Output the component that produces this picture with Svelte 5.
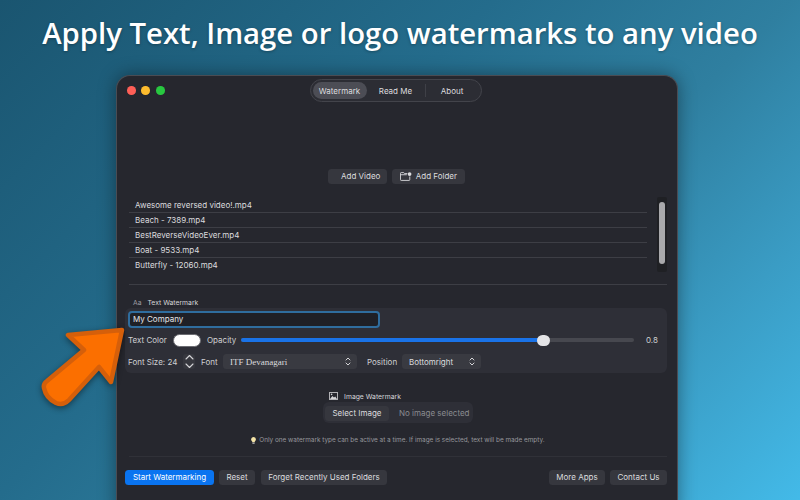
<script lang="ts">
  const files = [
    'Awesome reversed video!.mp4',
    'Beach - 7389.mp4',
    'BestReverseVideoEver.mp4',
    'Boat - 9533.mp4',
    'Butterfly - 12060.mp4'
  ];
  const tabs = ['Watermark', 'Read Me', 'About'];
  let active = $state('Watermark');
  let company = $state('My Company');
  let opacity = 0.8;
</script>

<div class="page">
  <h1>Apply Text, Image or logo watermarks to any video</h1>

  <div class="window">
    <header class="titlebar">
      <div class="lights">
        <span class="light red"></span>
        <span class="light yellow"></span>
        <span class="light green"></span>
      </div>
      <nav class="tabs">
        {#each tabs as tab}
          <button class="tab" class:active={active === tab} onclick={() => (active = tab)}>{tab}</button>
        {/each}
      </nav>
    </header>

    <div class="add-row">
      <button class="btn add-video">Add Video</button>
      <button class="btn add-folder">
        <svg width="12" height="9" viewBox="0 0 12 9" fill="none" stroke="#dcdcdf" stroke-width="0.9">
          <path d="M7.5 1.5H4.6L3.8 .5H1.2Q.5 .5 .5 1.2V7.8Q.5 8.5 1.2 8.5H9.3Q10 8.5 10 7.8V4.5" />
          <path d="M.5 2.7H7" />
          <circle cx="9.8" cy="2" r="1.9" fill="#dcdcdf" stroke="none" />
        </svg>
        Add Folder
      </button>
    </div>

    <div class="list-wrap">
      <ul class="files">
        {#each files as file}
          <li>{file}</li>
        {/each}
      </ul>
      <div class="scrollbar"><span class="thumb"></span></div>
    </div>

    <div class="divider"></div>

    <div class="section-label text-label">
      <span class="aa">Aa</span>
      <span>Text Watermark</span>
    </div>

    <section class="panel">
      <input class="text-input" bind:value={company} />
      <div class="row opacity-row">
        <span class="color-label">Text Color</span>
        <span class="swatch"></span>
        <span class="opacity-label">Opacity</span>
        <div class="slider">
          <span class="fill" style="width: {opacity * 100 - 2}%"></span>
          <span class="knob"></span>
        </div>
        <span class="value">{opacity}</span>
      </div>
      <div class="row font-row">
        <span class="size-label">Font Size: 24</span>
        <span class="stepper">
          <svg width="9" height="15" viewBox="0 0 9 15" fill="none" stroke="#d5d5d8" stroke-width="1.1" stroke-linecap="round" stroke-linejoin="round">
            <path d="M1 5L4.5 1.5L8 5" />
            <path d="M1 10L4.5 13.5L8 10" />
          </svg>
        </span>
        <span class="font-label">Font</span>
        <div class="select font-select">
          <span class="serif">ITF Devanagari</span>
          {@render chevrons()}
        </div>
        <span class="pos-label">Position</span>
        <div class="select pos-select">
          <span>Bottomright</span>
          {@render chevrons()}
        </div>
      </div>
    </section>

    <div class="section-label image-label">
      <svg width="9" height="8" viewBox="0 0 9 8">
        <rect x="0.4" y="0.6" width="8.2" height="6.8" fill="none" stroke="#d5d5d8" stroke-width="0.8" />
        <path d="M1 7L3.4 4L5 5.6L6.2 4.6L8 7Z" fill="#d5d5d8" />
        <circle cx="2.6" cy="2.4" r="0.8" fill="#d5d5d8" />
      </svg>
      <span>Image Watermark</span>
    </div>

    <div class="image-pick">
      <div class="image-box">
        <button class="btn select-image">Select Image</button>
        <span class="no-image">No image selected</span>
      </div>
    </div>

    <p class="hint">
      <svg width="5" height="7" viewBox="0 0 5 7">
        <path d="M2.5 0A2.4 2.4 0 0 0 1.2 4.4V5.2H3.8V4.4A2.4 2.4 0 0 0 2.5 0Z" fill="#f4e3a6" />
        <rect x="1.4" y="5.6" width="2.2" height="1.2" fill="#b9b9bd" />
      </svg>
      Only one watermark type can be active at a time. If image is selected, text will be made empty.
    </p>

    <div class="divider bottom"></div>

    <footer class="actions">
      <button class="btn primary">Start Watermarking</button>
      <button class="btn reset">Reset</button>
      <button class="btn forget">Forget Recently Used Folders</button>
      <span class="spacer"></span>
      <button class="btn more">More Apps</button>
      <button class="btn contact">Contact Us</button>
    </footer>
  </div>

  <svg class="arrow" width="100" height="96" viewBox="0 0 100 96">
    <path
      d="M32 13L86 8L75 60L63 45L33 78Q27 84 20 81Q10 76 8 66Q7 62 11 59L48 28Z"
      fill="#fb6f00"
      stroke="#d55f0a"
      stroke-width="4.5"
      stroke-linejoin="round"
    />
  </svg>
</div>

{#snippet chevrons()}
  <svg width="6" height="9" viewBox="0 0 6 9" fill="none" stroke="#d5d5d8" stroke-width="1" stroke-linecap="round" stroke-linejoin="round">
    <path d="M1 3L3 1L5 3" />
    <path d="M1 6L3 8L5 6" />
  </svg>
{/snippet}

<style>
  :global(body) {
    margin: 0;
  }
  .page {
    position: relative;
    width: 800px;
    height: 500px;
    overflow: hidden;
    display: flex;
    flex-direction: column;
    background: linear-gradient(135deg, #1a5570 0%, #246c8c 38%, #2f7fa0 61%, #3a9cc4 80%, #43bae8 100%);
    font-family: Inter, "Liberation Sans", sans-serif;
    color: #d5d5d8;
  }
  h1 {
    flex-shrink: 0;
    margin: 0;
    padding-top: 15px;
    height: 60px;
    box-sizing: border-box;
    text-align: center;
    font-family: "Open Sans", "Noto Sans", sans-serif;
    font-size: 29.3px;
    line-height: 36px;
    font-weight: 600;
    color: #fff;
    white-space: nowrap;
    text-shadow: 0 1px 3px rgba(0, 0, 0, 0.3);
  }
  .window {
    flex-shrink: 0;
    box-sizing: border-box;
    width: 562px;
    height: 440px;
    margin: 15px 0 0 116px;
    padding: 0 10px 0 12px;
    background: #26272e;
    border: 1px solid #4a4c53;
    border-bottom: none;
    border-radius: 14px 14px 0 0;
    display: flex;
    flex-direction: column;
    font-size: 8px;
    box-shadow: 0 0 18px rgba(0, 0, 0, 0.4);
  }
  .titlebar {
    position: relative;
    height: 30px;
    display: flex;
    align-items: center;
    justify-content: center;
    flex-shrink: 0;
  }
  .lights {
    position: absolute;
    left: -2px;
    top: 10px;
    display: flex;
    gap: 5.8px;
  }
  .light {
    width: 8.7px;
    height: 8.7px;
    border-radius: 50%;
  }
  .red {
    background: #ff5f57;
  }
  .yellow {
    background: #febc2e;
  }
  .green {
    background: #28c840;
  }
  .tabs {
    box-sizing: border-box;
    display: flex;
    align-items: center;
    width: 172px;
    height: 23px;
    padding: 2px;
    margin-left: -5px;
    margin-top: -1px;
    border: 1px solid #43444b;
    border-radius: 12px;
    background: #2c2d34;
  }
  .tab {
    height: 17px;
    padding: 0;
    border: none;
    border-radius: 9px;
    background: transparent;
    color: #dcdcdf;
    font: inherit;
    cursor: pointer;
  }
  .tab:nth-child(1) {
    width: 54px;
  }
  .tab:nth-child(2) {
    width: 58px;
  }
  .tab:nth-child(3) {
    flex: 1;
    height: 13px;
    border-left: 1px solid #3f4047;
    border-radius: 0;
  }
  .tab.active {
    background: #4c4d55;
  }
  .btn {
    box-sizing: border-box;
    height: 15px;
    padding: 0;
    border: none;
    border-radius: 3.5px;
    background: #36373e;
    color: #dcdcdf;
    font: inherit;
    line-height: 15px;
    white-space: nowrap;
    cursor: pointer;
  }
  .add-row {
    display: flex;
    justify-content: center;
    gap: 5px;
    margin: 63px 0 0 -3px;
    height: 15px;
  }
  .add-video {
    width: 59px;
    padding-left: 13px;
    text-align: left;
  }
  .add-folder {
    width: 73px;
    display: flex;
    align-items: center;
    gap: 4px;
    padding: 0 8px;
  }
  .list-wrap {
    display: flex;
    height: 76px;
    margin-top: 13px;
    flex-shrink: 0;
  }
  .files {
    list-style: none;
    margin: 0;
    padding: 1px 0 0;
    width: 519px;
  }
  .files li {
    box-sizing: border-box;
    height: 15px;
    line-height: 14px;
    padding-left: 6px;
    border-bottom: 1px solid #3d3e45;
    color: #dcdcdf;
  }
  .files li:last-child {
    border-bottom: none;
  }
  .scrollbar {
    box-sizing: border-box;
    width: 10px;
    height: 75px;
    margin-left: 10px;
    padding: 5px 2px;
    background: #1f2024;
    border-radius: 2px;
  }
  .thumb {
    display: block;
    width: 6px;
    height: 62px;
    border-radius: 3px;
    background: #a9a9ac;
  }
  .divider {
    height: 1px;
    background: #3d3e45;
    flex-shrink: 0;
    margin-top: 11px;
  }
  .section-label {
    display: flex;
    align-items: center;
    font-size: 6.8px;
    flex-shrink: 0;
  }
  .text-label {
    gap: 6px;
    height: 10px;
    margin: 12px 0 1px 4px;
  }
  .aa {
    color: #9d9da2;
  }
  .panel {
    box-sizing: border-box;
    height: 65px;
    margin-left: -4px;
    padding: 2.5px 4px 0 3px;
    background: #2e2f37;
    border-radius: 6px;
    flex-shrink: 0;
  }
  .text-input {
    display: block;
    box-sizing: border-box;
    width: 252px;
    height: 17px;
    padding: 0 3px;
    border: 2px solid #2f6d9e;
    border-radius: 4px;
    background: #1f2026;
    color: #e6e6e8;
    font: inherit;
    outline: none;
  }
  .row {
    display: flex;
    align-items: center;
    color: #cfcfd2;
    white-space: nowrap;
  }
  .opacity-row {
    height: 13px;
    margin-top: 6px;
  }
  .color-label {
    width: 45px;
  }
  .swatch {
    box-sizing: border-box;
    width: 28px;
    height: 13px;
    border: 1px solid #6b6c72;
    border-radius: 7px;
    background: #fff;
  }
  .opacity-label {
    width: 34px;
    margin-left: 6px;
  }
  .slider {
    position: relative;
    width: 393px;
    height: 4px;
    border-radius: 2px;
    background: #47484f;
  }
  .fill {
    display: block;
    height: 100%;
    border-radius: 2px;
    background: #1a73e8;
  }
  .knob {
    position: absolute;
    left: 296px;
    top: -3.5px;
    width: 13px;
    height: 11px;
    border-radius: 6px;
    background: #e4e4e6;
  }
  .value {
    margin-left: 12px;
  }
  .font-row {
    height: 15px;
    margin-top: 7.5px;
  }
  .size-label {
    width: 55px;
  }
  .stepper {
    display: flex;
    align-items: center;
    justify-content: center;
    width: 12px;
    height: 15px;
    border-radius: 3px;
    background: #36373e;
  }
  .font-label {
    width: 22px;
    margin-left: 6px;
  }
  .select {
    box-sizing: border-box;
    display: flex;
    align-items: center;
    justify-content: space-between;
    height: 15px;
    padding: 0 6px 0 7px;
    border-radius: 3.5px;
    background: #393a41;
    color: #dcdcdf;
  }
  .font-select {
    width: 134px;
  }
  .serif {
    font-family: "Liberation Serif", serif;
    font-size: 9px;
  }
  .pos-label {
    width: 35px;
    margin-left: 10px;
  }
  .pos-select {
    width: 79px;
  }
  .image-label {
    justify-content: center;
    gap: 6px;
    height: 10px;
    margin: 18px 66px 0 0;
  }
  .image-pick {
    display: flex;
    justify-content: center;
    margin-top: 1px;
    flex-shrink: 0;
  }
  .image-box {
    box-sizing: border-box;
    display: flex;
    align-items: center;
    width: 150px;
    height: 21px;
    padding: 1px 2px 0;
    border-radius: 6px;
    background: #2e2f37;
  }
  .select-image {
    width: 64px;
  }
  .no-image {
    padding-left: 10px;
    color: #8a8b90;
  }
  .hint {
    display: flex;
    align-items: center;
    justify-content: center;
    gap: 3px;
    height: 10px;
    margin: 12px 0 0;
    font-size: 6.4px;
    color: #96979c;
    flex-shrink: 0;
  }
  .divider.bottom {
    margin-top: 11px;
    background: #303138;
  }
  .actions {
    display: flex;
    gap: 5px;
    margin-top: 13px;
    margin-left: -4px;
  }
  .spacer {
    flex: 1;
  }
  .primary {
    width: 89px;
    background: #0a74f0;
    color: #fff;
  }
  .reset {
    width: 36px;
  }
  .forget {
    width: 126px;
    margin-left: 1px;
  }
  .more {
    width: 56px;
  }
  .contact {
    width: 57px;
  }
  .arrow {
    position: absolute;
    left: 36px;
    top: 322px;
    filter: drop-shadow(0 2px 3px rgba(0, 0, 0, 0.45));
  }
</style>
